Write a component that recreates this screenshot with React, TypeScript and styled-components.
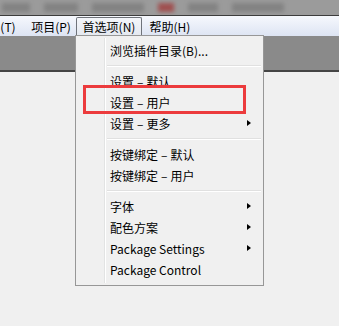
import React from "react";
import styled, { createGlobalStyle } from "styled-components";

const GlobalStyle = createGlobalStyle`
  html, body {
    margin: 0;
    padding: 0;
    background: #f0f0f0;
  }
  body {
    font-family: "Noto Sans CJK SC", "Microsoft YaHei", sans-serif;
    font-size: 12px;
    color: #000;
  }
`;

const Window = styled.div`
  position: relative;
  width: 339px;
  height: 326px;
  overflow: hidden;
  background: #f0f0f0;
  display: flex;
  flex-direction: column;
`;

const TitleStrip = styled.div`
  height: 15px;
  background: #9b9b9b;
  border-bottom: 1px solid #3c3c3c;
  display: flex;
  align-items: center;
  gap: 14px;
  padding-left: 2px;
  overflow: hidden;
`;

const Blur = styled.span<{ $w: number; $red?: boolean }>`
  display: block;
  width: ${(p) => p.$w}px;
  height: 9px;
  background: ${(p) => (p.$red ? "#a04848" : "#6f6f6f")};
  opacity: ${(p) => (p.$red ? 0.9 : 0.55)};
  filter: blur(2px);
  flex: none;
`;

const MenuBar = styled.div`
  height: 20px;
  background: linear-gradient(#f6f8fd, #dde4f3);
  display: flex;
  align-items: stretch;
`;

const BarItem = styled.div<{ $open?: boolean; $w: number; $pad?: number }>`
  width: ${(p) => p.$w}px;
  display: flex;
  align-items: center;
  justify-content: center;
  padding-left: ${(p) => p.$pad ?? 0}px;
  line-height: 1;
  box-sizing: border-box;
  margin-top: 1px;
  border: 1px solid ${(p) => (p.$open ? "#6f737a" : "transparent")};
  border-bottom: none;
  border-radius: 2px 2px 0 0;
  background: ${(p) =>
    p.$open ? "linear-gradient(#f4f6fa, #e4e8ef)" : "transparent"};
`;

const GrayBand = styled.div`
  height: 34px;
  background: #8a8a8a;
  border-bottom: 2px solid #454545;
`;

const Body = styled.div`
  flex: 1;
  background: #f0f0f0;
`;

const Menu = styled.div`
  position: absolute;
  left: 75px;
  top: 35px;
  width: 189px;
  box-sizing: border-box;
  border: 1px solid #979797;
  background: #f0f0f0;
  padding: 4px 2px 5px 2px;
  display: flex;
  flex-direction: column;
`;

const Gutter = styled.div`
  position: absolute;
  left: 28px;
  top: 2px;
  bottom: 2px;
  width: 1px;
  background: #e2e3e3;
  border-right: 1px solid #ffffff;
`;

const Item = styled.div`
  position: relative;
  height: 21px;
  display: flex;
  align-items: center;
  padding-left: 32px;
  white-space: nowrap;
  line-height: 1;
`;

const Dash = styled.span`
  margin: 0 3px;
`;

const Arrow = styled.span`
  position: absolute;
  right: 10px;
  top: 7px;
  width: 0;
  height: 0;
  border-top: 3.5px solid transparent;
  border-bottom: 3.5px solid transparent;
  border-left: 4px solid #000;
`;

const Separator = styled.div`
  height: 10px;
  display: flex;
  align-items: center;
  padding-left: 29px;
  &::after {
    content: "";
    flex: 1;
    height: 1px;
    background: #e0e0e0;
    border-bottom: 1px solid #ffffff;
  }
`;

const Highlight = styled.div`
  position: absolute;
  left: 83px;
  top: 85px;
  width: 163px;
  height: 29px;
  box-sizing: border-box;
  border: 3px solid #ec3b3d;
`;

type Entry = { label?: string; sub?: boolean; sep?: boolean };

const entries: Entry[] = [
  { label: "浏览插件目录(B)..." },
  { sep: true },
  { label: "设置 – 默认" },
  { label: "设置 – 用户" },
  { label: "设置 – 更多", sub: true },
  { sep: true },
  { label: "按键绑定 – 默认" },
  { label: "按键绑定 – 用户" },
  { sep: true },
  { label: "字体", sub: true },
  { label: "配色方案", sub: true },
  { label: "Package Settings", sub: true },
  { label: "Package Control" },
];

const Label = ({ text }: { text: string }) => {
  const parts = text.split(" – ");
  if (parts.length < 2) return <>{text}</>;
  return (
    <>
      {parts[0]} <Dash>–</Dash> {parts[1]}
    </>
  );
};

export default function App() {
  return (
    <>
      <GlobalStyle />
      <Window>
        <TitleStrip>
          <Blur $w={28} />
          <Blur $w={34} />
          <Blur $w={52} />
          <Blur $w={16} $red />
          <Blur $w={30} />
          <Blur $w={52} />
        </TitleStrip>
        <MenuBar>
          <BarItem $w={16}>(T)</BarItem>
          <BarItem $w={60} $pad={10}>项目(P)</BarItem>
          <BarItem $w={66} $open>首选项(N)</BarItem>
          <BarItem $w={56}>帮助(H)</BarItem>
        </MenuBar>
        <GrayBand />
        <Body />
        <Menu>
          <Gutter />
          {entries.map((e, i) =>
            e.sep ? (
              <Separator key={i} />
            ) : (
              <Item key={i}>
                <Label text={e.label ?? ""} />
                {e.sub && <Arrow />}
              </Item>
            )
          )}
        </Menu>
        <Highlight />
      </Window>
    </>
  );
}
